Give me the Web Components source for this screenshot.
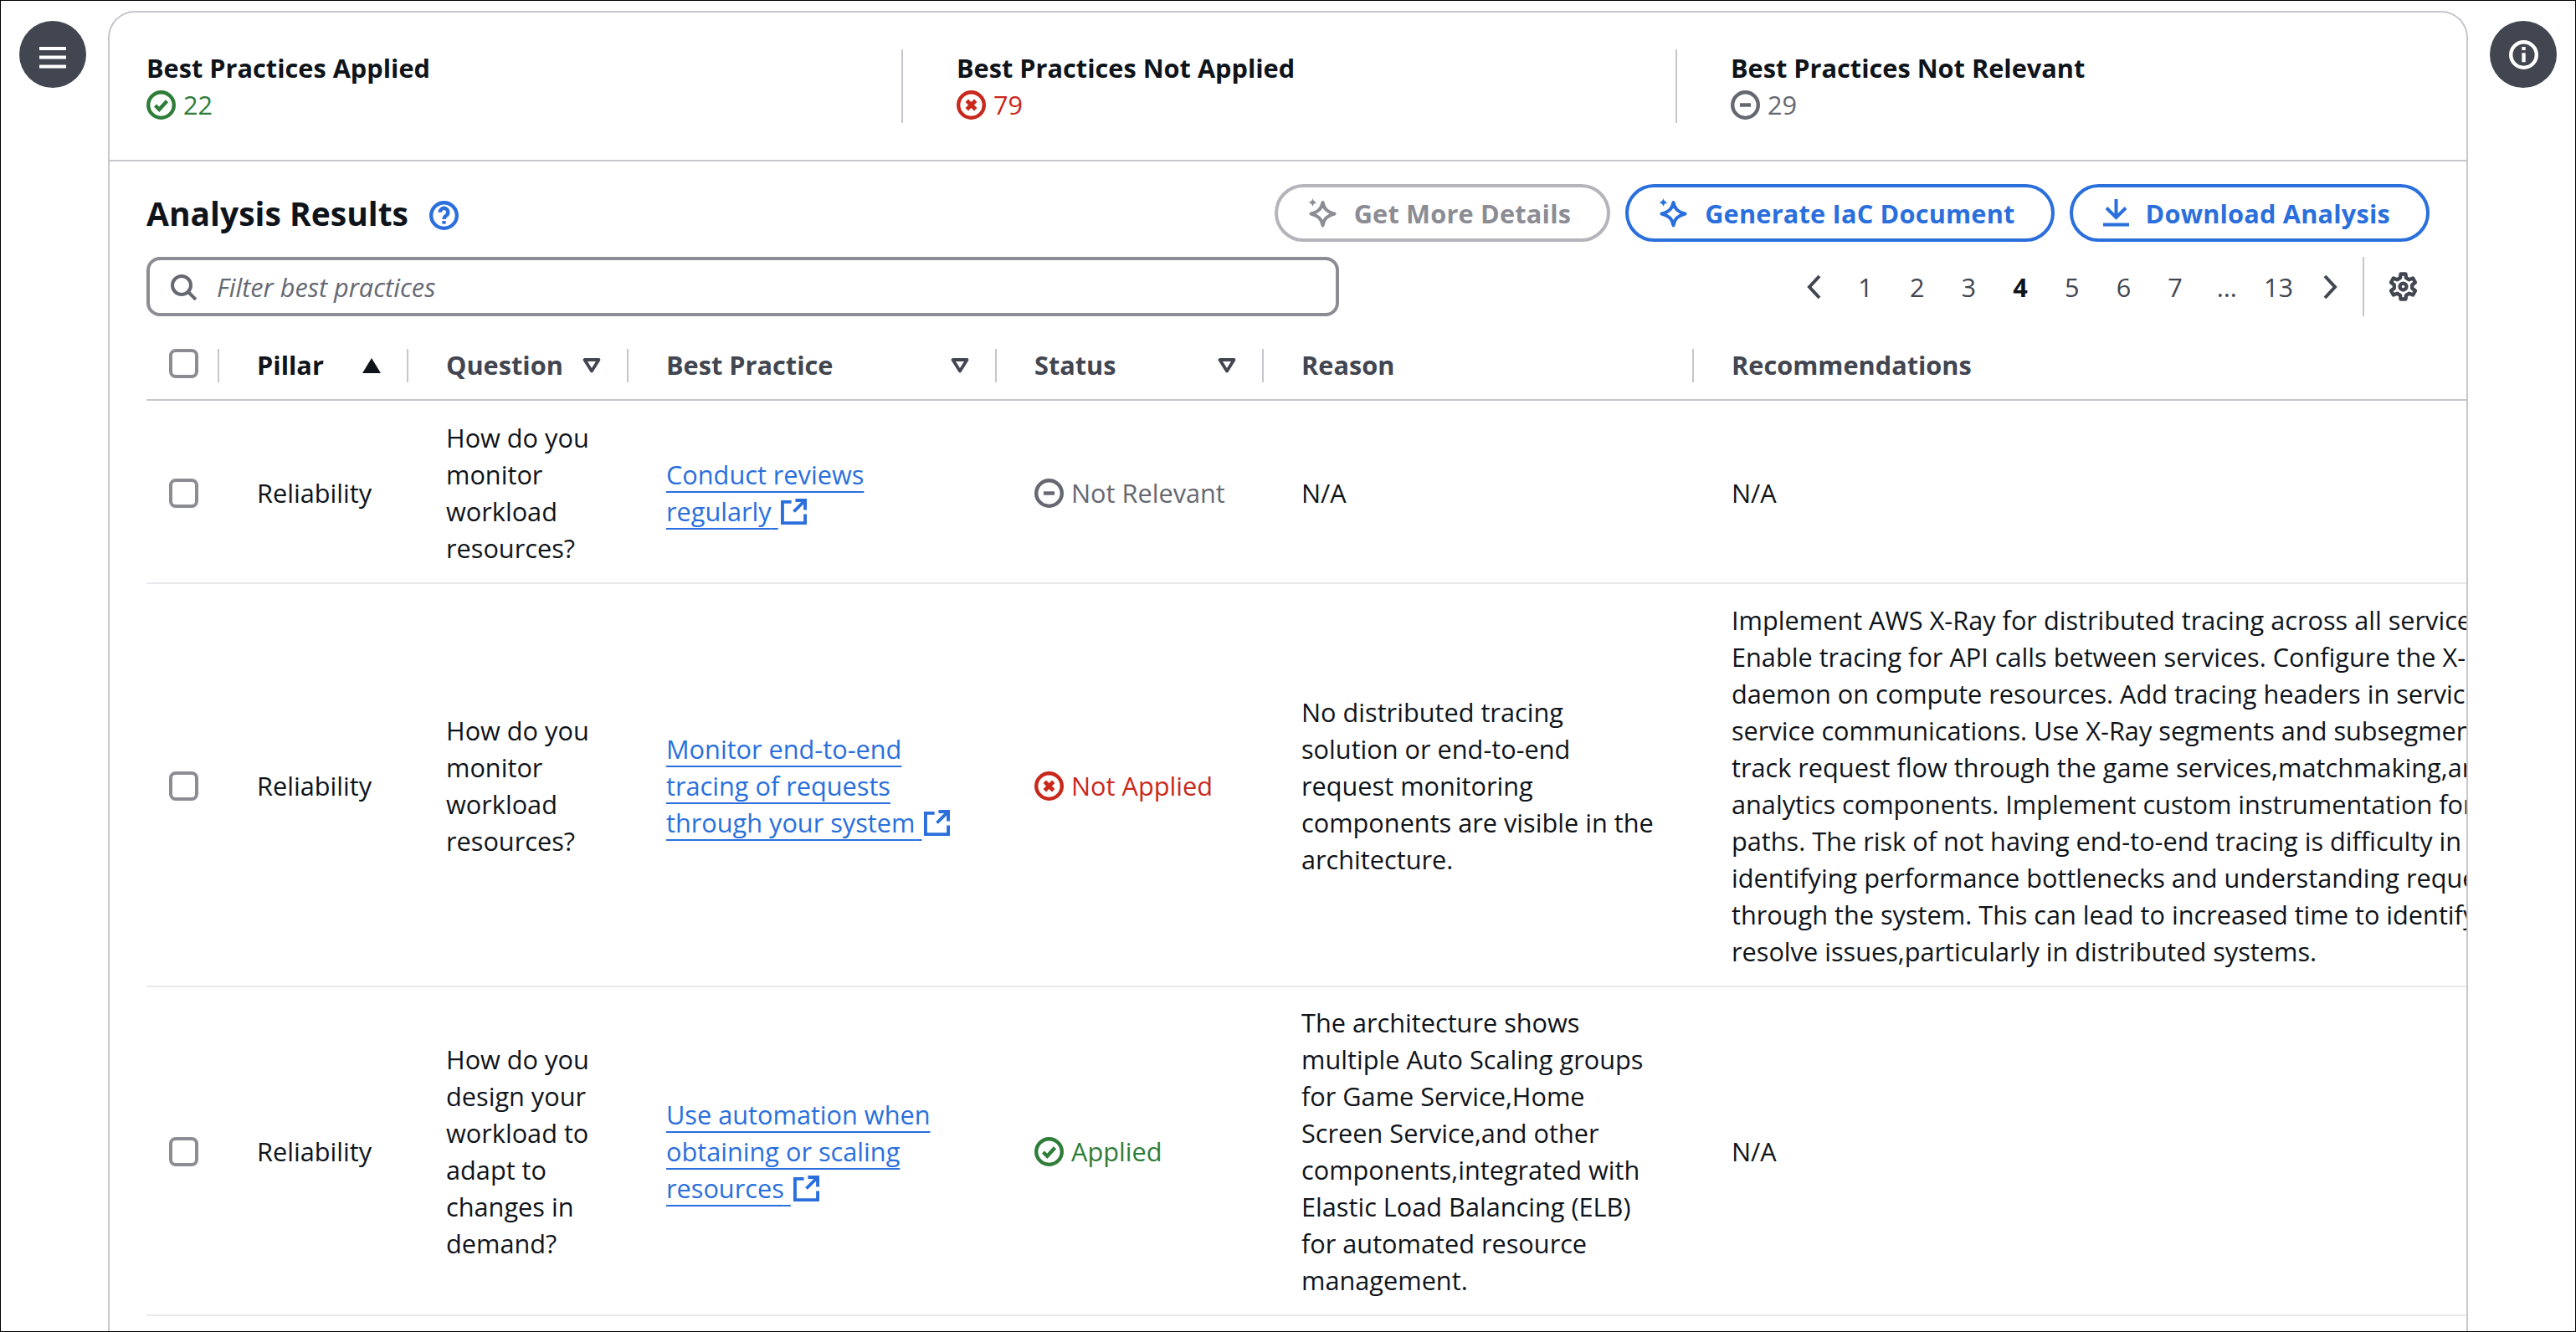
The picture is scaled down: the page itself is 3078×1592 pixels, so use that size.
<!DOCTYPE html>
<html lang="en">
<head>
<meta charset="utf-8">
<title>Analysis Results</title>
<style>
  html, body { margin: 0; background: #fff; }
  body { font-family: "Open Sans", "Liberation Sans", sans-serif; font-size: 30.7px; line-height: 44px; color: #0f141a; }
</style>
</head>
<body>
<app-shell>
  <round-button slot="left" icon="menu"></round-button>
  <analysis-card>
    <summary-stat slot="summary" status="applied" label="Best Practices Applied" value="22"></summary-stat>
    <summary-stat slot="summary" status="notapplied" label="Best Practices Not Applied" value="79"></summary-stat>
    <summary-stat slot="summary" status="irrelevant" label="Best Practices Not Relevant" value="29"></summary-stat>

    <action-button slot="actions" icon="sparkle" disabled>Get More Details</action-button>
    <action-button slot="actions" icon="sparkle">Generate IaC Document</action-button>
    <action-button slot="actions" icon="download">Download Analysis</action-button>

    <filter-input slot="filter" placeholder="Filter best practices"></filter-input>
    <page-nav slot="pager" current="4"></page-nav>

    <result-table slot="table">
      <head-row>
        <row-check></row-check>
        <head-cell sort="asc" active>Pillar</head-cell>
        <head-cell sort="none">Question</head-cell>
        <head-cell sort="none">Best Practice</head-cell>
        <head-cell sort="none">Status</head-cell>
        <head-cell>Reason</head-cell>
        <head-cell>Recommendations</head-cell>
      </head-row>

      <result-row pt="22" pb="19">
        <row-check></row-check>
        <text-cell>Reliability</text-cell>
        <text-cell>How do you monitor workload resources?</text-cell>
        <text-cell><ext-link>Conduct reviews regularly</ext-link></text-cell>
        <text-cell><status-label status="irrelevant">Not Relevant</status-label></text-cell>
        <text-cell>N/A</text-cell>
        <text-cell>N/A</text-cell>
      </result-row>

      <result-row pt="21" pb="19">
        <row-check></row-check>
        <text-cell>Reliability</text-cell>
        <text-cell>How do you monitor workload resources?</text-cell>
        <text-cell><ext-link>Monitor end-to-end tracing of requests through your system</ext-link></text-cell>
        <text-cell><status-label status="notapplied">Not Applied</status-label></text-cell>
        <text-cell>No distributed tracing<br>solution or end-to-end<br>request monitoring<br>components are visible in the<br>architecture.</text-cell>
        <text-cell nowrap>Implement AWS X-Ray for distributed tracing across all services.<br>Enable tracing for API calls between services. Configure the X-Ray<br>daemon on compute resources. Add tracing headers in service-to-<br>service communications. Use X-Ray segments and subsegments to<br>track request flow through the game services,matchmaking,and<br>analytics components. Implement custom instrumentation for critical<br>paths. The risk of not having end-to-end tracing is difficulty in<br>identifying performance bottlenecks and understanding request flow<br>through the system. This can lead to increased time to identify and<br>resolve issues,particularly in distributed systems.</text-cell>
      </result-row>

      <result-row pt="20" pb="19">
        <row-check></row-check>
        <text-cell>Reliability</text-cell>
        <text-cell>How do you design your workload to adapt to changes in demand?</text-cell>
        <text-cell><ext-link>Use automation when obtaining or scaling resources</ext-link></text-cell>
        <text-cell><status-label status="applied">Applied</status-label></text-cell>
        <text-cell>The architecture shows<br>multiple Auto Scaling groups<br>for Game Service,Home<br>Screen Service,and other<br>components,integrated with<br>Elastic Load Balancing (ELB)<br>for automated resource<br>management.</text-cell>
        <text-cell>N/A</text-cell>
      </result-row>
    </result-table>
  </analysis-card>
  <round-button slot="right" icon="info"></round-button>
</app-shell>

<script>
// gear outline, 6 teeth, built once so the points stay regular
function gearPath() {
  const pts = [];
  for (let i = 0; i < 6; i++) {
    const a = -90 + i * 60;
    [[5, -19], [7, -11], [7, 11], [5, 19]].forEach(([r, d]) => {
      const t = (a + d) * Math.PI / 180;
      pts.push((8 + r * Math.cos(t)).toFixed(2) + ' ' + (8 + r * Math.sin(t)).toFixed(2));
    });
  }
  return 'M' + pts.join('L') + 'Z';
}

const ring = '<circle cx="8" cy="8" r="7" fill="none" stroke="currentColor" stroke-width="2"/>';
const statusMarks = {
  applied: '<path d="M4.8 8.2 7 10.4l4.2-4.6" fill="none" stroke="currentColor" stroke-width="2"/>',
  notapplied: '<path d="M5.6 5.6l4.8 4.8M10.4 5.6l-4.8 4.8" fill="none" stroke="currentColor" stroke-width="2.2"/>',
  irrelevant: '<path d="M5 8h6" fill="none" stroke="currentColor" stroke-width="2"/>'
};
const statusColors = { applied: '#2e7d38', notapplied: '#c9281c', irrelevant: '#656871' };

function statusIcon(status) {
  return `<svg width="35" height="35" viewBox="0 0 16 16" style="color:${statusColors[status]};flex:none">${ring}${statusMarks[status]}</svg>`;
}

const icons = {
  menu: '<svg width="32" height="40" viewBox="0 0 32 40" fill="none" stroke="#fff" stroke-width="4.2"><path d="M0 13h32M0 23.5h32M0 34.5h32"/></svg>',
  info: '<svg width="35" height="35" viewBox="0 0 16 16" fill="none" stroke="#fff" stroke-width="2"><circle cx="8" cy="8" r="7"/><path d="M8 7v5M8 3.7v1.8"/></svg>',
  sparkle: '<svg width="35" height="35" viewBox="0 0 35 35"><path d="M17.5 5C19 12.5 22.5 16 31.5 18.5 22.5 21 19 24.5 17.5 32.5 16 24.5 12.5 21 3.5 18.5 12.5 16 16 12.5 17.5 5Z" fill="none" stroke="currentColor" stroke-width="4" stroke-linejoin="round"/><path d="M5.5 0Q6.2 4 10.5 5 6.2 6 5.5 10 4.8 6 .5 5 4.8 4 5.5 0Z" fill="currentColor"/></svg>',
  download: '<svg width="31" height="33" viewBox="0 0 31 33" fill="none" stroke="currentColor" stroke-width="4"><path d="M15.5 0v22M4 10.5l11.5 11.5 11.5-11.5M0 30.5h31"/></svg>',
  search: '<svg width="32" height="32" viewBox="0 0 16 16" fill="none" stroke="#656871" stroke-width="2"><circle cx="7" cy="7" r="5.5"/><path d="M11 11l4.500 4.500"/></svg>',
  help: '<svg width="35" height="35" viewBox="0 0 16 16" fill="none" stroke="#2a6fdc" stroke-width="2"><circle cx="8" cy="8" r="7"/><path d="M5.8 6.3a2.2 2.2 0 1 1 3.4 1.8C8.5 8.6 8 9 8 10"/><path d="M8 11v1.600"/></svg>',
  gear: `<svg width="35" height="35" viewBox="0 0 16 16" fill="none" stroke="#424650" stroke-width="2" stroke-linejoin="round"><path d="${gearPath()}"/><circle cx="8" cy="8" r="1.8"/></svg>`,
  external: '<svg width="31" height="31" viewBox="0 0 16 16" fill="none" stroke="#2a6fdc" stroke-width="2"><path d="M6.5 2H1v13h14V9.500"/><path d="M9 1h6v6"/><path d="M14.8 1.200 8 8"/></svg>',
  prev: '<svg width="19" height="30" viewBox="0 0 19 30" fill="none" stroke="#424650" stroke-width="4"><path d="M16 2 4 15l12 13"/></svg>',
  next: '<svg width="19" height="30" viewBox="0 0 19 30" fill="none" stroke="#424650" stroke-width="4"><path d="M3 2l12 13L3 28"/></svg>',
  sortUp: '<svg width="22" height="18" viewBox="0 0 22 18"><path d="M11 0 22 18H0Z" fill="#0f141a"/></svg>',
  sortDown: '<svg width="22" height="18" viewBox="0 0 22 18"><path d="M2.500 2h17L11 15.500Z" fill="none" stroke="#424650" stroke-width="3.800" stroke-linejoin="round"/></svg>'
};

class ShadowElement extends HTMLElement {
  constructor() {
    super();
    this.attachShadow({ mode: 'open' });
  }

  connectedCallback() {
    this.shadowRoot.innerHTML = this.template();
  }
}

class AppShell extends ShadowElement {
  template() {
    return `
      <style>
        :host {
          display: flex;
          gap: 26px;
          box-sizing: border-box;
          width: 3078px;
          height: 1592px;
          padding: 12px 22px 0;
          border: 1px solid #000;
          overflow: hidden;
        }
        .side { flex: none; width: 80px; padding-top: 12px; }
      </style>
      <div class="side"><slot name="left"></slot></div>
      <slot></slot>
      <div class="side"><slot name="right"></slot></div>
    `;
  }
}

class RoundButton extends ShadowElement {
  template() {
    return `
      <style>
        :host {
          display: flex;
          align-items: center;
          justify-content: center;
          width: 80px;
          height: 80px;
          border-radius: 50%;
          background: #424650;
        }
      </style>
      ${icons[this.getAttribute('icon')]}
    `;
  }
}

class AnalysisCard extends ShadowElement {
  template() {
    return `
      <style>
        :host {
          display: block;
          flex: 1;
          min-width: 0;
          border: 2px solid #c6c6cd;
          border-bottom: none;
          border-radius: 32px 32px 0 0;
          overflow: hidden;
        }
        .summary {
          display: grid;
          grid-template-columns: 902px 925px 1fr;
          padding: 44px 44px 44px;
          border-bottom: 2px solid #c6c6cd;
        }
        .tools { padding: 27px 44px 18px; }
        .line { display: flex; align-items: center; justify-content: space-between; }
        .actions { display: flex; gap: 18px; height: 69px; }
        .title { display: flex; align-items: center; gap: 25px; }
        h2 { margin: 0; font-size: 39px; line-height: 48px; font-weight: 700; }
        .help { display: flex; margin-top: 5px; }
        .second { margin-top: 18px; height: 71px; }
        .table { margin-left: 44px; }
      </style>
      <div class="summary"><slot name="summary"></slot></div>
      <div class="tools">
        <div class="line">
          <div class="title"><h2>Analysis Results</h2><span class="help">${icons.help}</span></div>
          <div class="actions"><slot name="actions"></slot></div>
        </div>
        <div class="line second">
          <slot name="filter"></slot>
          <slot name="pager"></slot>
        </div>
      </div>
      <div class="table"><slot name="table"></slot></div>
    `;
  }
}

class SummaryStat extends ShadowElement {
  template() {
    const status = this.getAttribute('status');
    return `
      <style>
        :host { display: block; padding-left: 64px; border-left: 2px solid #c6c6cd; }
        :host(:first-child) { padding-left: 0; border-left: none; }
        .label { font-weight: 700; }
        .value { display: flex; align-items: center; gap: 9px; color: ${statusColors[status]}; }
      </style>
      <div class="label">${this.getAttribute('label')}</div>
      <div class="value">${statusIcon(status)}<span>${this.getAttribute('value')}</span></div>
    `;
  }
}

class ActionButton extends ShadowElement {
  template() {
    const disabled = this.hasAttribute('disabled');
    return `
      <style>
        :host {
          display: flex;
          align-items: center;
          gap: 20px;
          box-sizing: border-box;
          height: 69px;
          padding: 0 43px 0 36px;
          border: 4px solid ${disabled ? '#b4b4bb' : '#2a6fdc'};
          border-radius: 40px;
          color: ${disabled ? '#8c8c94' : '#2a6fdc'};
          font-weight: 700;
          letter-spacing: 0.2px;
        }
      </style>
      ${icons[this.getAttribute('icon')]}<slot></slot>
    `;
  }
}

class FilterInput extends ShadowElement {
  template() {
    return `
      <style>
        :host {
          display: flex;
          align-items: center;
          gap: 24px;
          box-sizing: border-box;
          width: 1425px;
          height: 71px;
          padding-left: 24px;
          border: 4px solid #8c8c94;
          border-radius: 16px;
          color: #656871;
          font-style: italic;
        }
      </style>
      ${icons.search}<span>${this.getAttribute('placeholder')}</span>
    `;
  }
}

class PageNav extends ShadowElement {
  template() {
    const current = this.getAttribute('current');
    const pages = ['1', '2', '3', '4', '5', '6', '7', '...', '13'].map((p) =>
      `<span class="page${p === current ? ' on' : ''}">${p}</span>`).join('');
    return `
      <style>
        :host { display: flex; align-items: center; height: 71px; color: #424650; }
        .page { display: flex; justify-content: center; align-items: center; width: 61.7px; }
        .on { color: #0f141a; font-weight: 700; }
        .rule { align-self: stretch; width: 2px; margin-left: 8px; background: #c6c6cd; }
        .gear { display: flex; padding: 0 14px 0 29px; }
      </style>
      <span class="page">${icons.prev}</span>
      ${pages}
      <span class="page">${icons.next}</span>
      <span class="rule"></span>
      <span class="gear">${icons.gear}</span>
    `;
  }
}

class ResultTable extends ShadowElement {
  template() {
    return `
      <style>
        :host {
          display: block;
          --cols: 86px 226px 263px 440px 319px 514px 1000px;
        }
      </style>
      <slot></slot>
    `;
  }
}

class HeadRow extends ShadowElement {
  template() {
    return `
      <style>
        :host {
          display: grid;
          grid-template-columns: var(--cols);
          align-items: center;
          height: 83px;
          box-sizing: border-box;
          border-bottom: 2px solid #c6c6cd;
        }
        ::slotted(row-check) { margin-top: -4px; }
      </style>
      <slot></slot>
    `;
  }
}

class HeadCell extends ShadowElement {
  template() {
    const sort = this.getAttribute('sort');
    const icon = sort === 'asc' ? icons.sortUp : sort === 'none' ? icons.sortDown : '';
    return `
      <style>
        :host {
          display: flex;
          align-items: center;
          height: 40px;
          margin-left: -1px;
          padding-right: 32px;
          border-left: 2px solid #c6c6cd;
          font-weight: 700;
          color: ${this.hasAttribute('active') ? '#0f141a' : '#424650'};
        }
        .text { flex: 1; margin-top: -2px; padding-left: 45px; white-space: nowrap; }
        svg { display: block; flex: none; }
      </style>
      <span class="text"><slot></slot></span>${icon}
    `;
  }
}

class RowCheck extends ShadowElement {
  template() {
    return `
      <style>
        :host { display: block; padding-left: 27px; }
        div {
          box-sizing: border-box;
          width: 35px;
          height: 35px;
          border: 4px solid #8c8c94;
          border-radius: 8px;
          background: #fff;
        }
      </style>
      <div></div>
    `;
  }
}

class ResultRow extends ShadowElement {
  template() {
    return `
      <style>
        :host {
          display: grid;
          grid-template-columns: var(--cols);
          align-items: center;
          padding: ${this.getAttribute('pt')}px 0 ${this.getAttribute('pb')}px;
          border-bottom: 2px solid #e9e9ed;
        }
      </style>
      <slot></slot>
    `;
  }
}

class TextCell extends ShadowElement {
  template() {
    return `
      <style>
        :host {
          display: block;
          padding: 0 40px 0 46px;
          white-space: ${this.hasAttribute('nowrap') ? 'nowrap' : 'normal'};
        }
      </style>
      <slot></slot>
    `;
  }
}

class ExtLink extends ShadowElement {
  template() {
    return `
      <style>
        :host {
          display: block;
          color: #2a6fdc;
        }
        a {
          color: inherit;
          text-decoration: underline;
          text-decoration-thickness: 2px;
          text-underline-offset: 8px;
        }
        svg { vertical-align: -4px; margin-left: 3px; }
      </style>
      <a href="#"><slot></slot> ${icons.external}</a>
    `;
  }
}

class StatusLabel extends ShadowElement {
  template() {
    const status = this.getAttribute('status');
    return `
      <style>
        :host { display: flex; align-items: center; gap: 9px; color: ${statusColors[status]}; }
      </style>
      ${statusIcon(status)}<slot></slot>
    `;
  }
}

customElements.define('app-shell', AppShell);
customElements.define('round-button', RoundButton);
customElements.define('analysis-card', AnalysisCard);
customElements.define('summary-stat', SummaryStat);
customElements.define('action-button', ActionButton);
customElements.define('filter-input', FilterInput);
customElements.define('page-nav', PageNav);
customElements.define('result-table', ResultTable);
customElements.define('head-row', HeadRow);
customElements.define('head-cell', HeadCell);
customElements.define('row-check', RowCheck);
customElements.define('result-row', ResultRow);
customElements.define('text-cell', TextCell);
customElements.define('ext-link', ExtLink);
customElements.define('status-label', StatusLabel);
</script>
</body>
</html>
